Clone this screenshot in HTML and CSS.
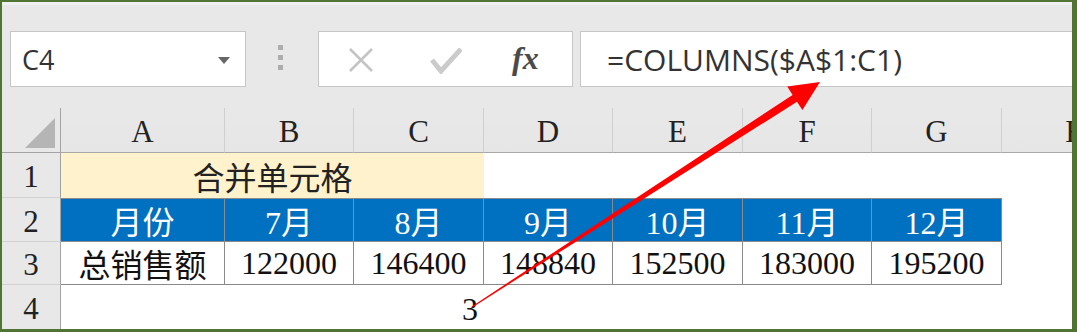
FILE: index.html
```html
<!DOCTYPE html>
<html lang="zh-CN">
<head>
  <meta charset="UTF-8">
  <title>COLUMNS</title>
  <link rel="stylesheet" href="styles.css">
</head>
<body>

  <div class="frame">
    <!-- formula bar -->
    <div class="formula-bar">
      <div class="name-box">
        <span class="name">C4</span>
        <span class="caret"></span>
      </div>
      <div class="grip"><i></i><i></i><i></i></div>
      <div class="buttons">
        <svg class="cancel" width="28" height="24" viewBox="0 0 28 24">
          <path d="M3 1 L25 23 M25 1 L3 23" stroke="#c4c4c4" stroke-width="2.6" fill="none"/>
        </svg>
        <svg class="enter" width="32" height="26" viewBox="0 0 32 26">
          <path d="M2 12 L11 23 L31 1" stroke="#cbcbcb" stroke-width="5" fill="none"/>
        </svg>
        <span class="fx">fx</span>
      </div>
      <div class="formula">=COLUMNS($A$1:C1)</div>
    </div>

    <!-- sheet -->
    <div class="sheet">
      <div class="corner"><span class="select-all"></span></div>
      <div class="col-head">A</div>
      <div class="col-head">B</div>
      <div class="col-head">C</div>
      <div class="col-head">D</div>
      <div class="col-head">E</div>
      <div class="col-head">F</div>
      <div class="col-head">G</div>
      <div class="col-head">H</div>

      <div class="row-head">1</div>
      <div class="merged">合并单元格</div>
      <div class="cell"></div>
      <div class="cell"></div>
      <div class="cell"></div>
      <div class="cell"></div>
      <div class="cell"></div>

      <div class="row-head">2</div>
      <div class="cell head">月份</div>
      <div class="cell head">7月</div>
      <div class="cell head">8月</div>
      <div class="cell head">9月</div>
      <div class="cell head">10月</div>
      <div class="cell head">11月</div>
      <div class="cell head">12月</div>
      <div class="cell"></div>

      <div class="row-head">3</div>
      <div class="cell data">总销售额</div>
      <div class="cell data">122000</div>
      <div class="cell data">146400</div>
      <div class="cell data">148840</div>
      <div class="cell data">152500</div>
      <div class="cell data">183000</div>
      <div class="cell data">195200</div>
      <div class="cell"></div>

      <div class="row-head last">4</div>
      <div class="cell"></div>
      <div class="cell"></div>
      <div class="cell num">3</div>
      <div class="cell"></div>
      <div class="cell"></div>
      <div class="cell"></div>
      <div class="cell"></div>
      <div class="cell"></div>
    </div>
  </div>

  <!-- red arrow from C4 to the formula -->
  <svg class="arrow" width="1077" height="332" viewBox="0 0 1077 332">
    <polygon points="471.7,306.5 792.6,94.9 787.2,86.5 820,82 802.4,110.1 797,101.7 472.3,307.5" fill="#ff0000"/>
  </svg>

</body>
</html>
```

FILE: styles.css
```css
body {
  margin: 0;
  padding: 0;
  position: relative;
  width: 1077px;
  height: 332px;
  overflow: hidden;
  background: #ffffff;
  color: #222;
}
.frame {
  box-sizing: border-box;
  width: 1077px;
  height: 332px;
  border: solid #4f7434;
  border-width: 2px 5px 3px 2px;
  overflow: hidden;
  background: #fff;
}

/* formula bar */
.formula-bar {
  height: 106px;
  box-sizing: border-box;
  display: flex;
  align-items: flex-start;
  background: #e8e8e8;
  border-top: 3px solid #f0f0f0;
  padding-top: 26px;
}
.name-box {
  box-sizing: border-box;
  width: 236px;
  height: 56px;
  margin-left: 8px;
  background: #fff;
  border: 1px solid #c6c6c6;
  display: flex;
  align-items: center;
  justify-content: space-between;
  padding: 0 15px 0 11px;
}
.name {
  font-family: "Open Sans", sans-serif;
  font-size: 27px;
  color: #333;
}
.caret {
  width: 0;
  height: 0;
  border-left: 6px solid transparent;
  border-right: 6px solid transparent;
  border-top: 7px solid #666;
  margin-top: 2px;
}
.grip {
  width: 5px;
  margin: 14px 35px 0 32px;
  display: flex;
  flex-direction: column;
  gap: 5px;
}
.grip i {
  display: block;
  width: 5px;
  height: 5px;
  background: #adadad;
}
.buttons {
  box-sizing: border-box;
  width: 255px;
  height: 56px;
  background: #fff;
  border: 1px solid #c6c6c6;
  display: flex;
  align-items: center;
  padding-left: 28px;
}
.cancel {
  margin-top: 2px;
}
.enter {
  margin-left: 55px;
  margin-top: 4px;
}
.fx {
  margin-left: 50px;
  font-family: "Liberation Serif", serif;
  font-style: italic;
  font-weight: bold;
  font-size: 32px;
  color: #4a4a4a;
  margin-top: -2px;
}
.formula {
  box-sizing: border-box;
  flex: 1;
  height: 56px;
  margin-left: 7px;
  background: #fff;
  border: 1px solid #c6c6c6;
  border-right: none;
  padding-left: 26px;
  display: flex;
  align-items: center;
  font-family: "Open Sans", sans-serif;
  font-size: 30px;
  color: #333;
}

/* sheet grid */
.sheet {
  display: grid;
  grid-template-columns: 59px 164px 129px 130px 129px 130px 129px 130px 150px;
  grid-template-rows: 45px 45px 44px 43px 44px;
  font-family: "Liberation Serif", "Noto Sans CJK SC", serif;
  font-size: 32px;
}
.sheet > div {
  box-sizing: border-box;
  display: flex;
  align-items: center;
  justify-content: center;
  white-space: nowrap;
}
.corner {
  background: #e8e8e8;
  border-right: 1px solid #a3a3a3;
  border-bottom: 1px solid #a3a3a3;
  position: relative;
}
.select-all {
  position: absolute;
  left: 23px;
  top: 10px;
  width: 0;
  height: 0;
  border-left: 30px solid transparent;
  border-bottom: 30px solid #b5b5b5;
}
.col-head {
  background: linear-gradient(#e8e8e8, #e8e8e8 5px, #e6e6e6);
  border-bottom: 1px solid #a8a8a8;
  border-right: 1px solid #cfcfcf;
  font-size: 31px;
  padding-top: 4px;
  color: #222;
}
.row-head {
  background: #e8e8e8;
  border-right: 1px solid #a3a3a3;
  border-bottom: 1px solid #d2d2d2;
  font-size: 31px;
  padding-top: 4px;
  color: #222;
}
.row-head.last {
  border-bottom: none;
}
.merged {
  grid-column: span 3;
  background: #fff2cc;
  color: #222;
}
.cell.head {
  background: #0070c0;
  color: #fff;
  border-top: 1px solid #8a8a8a;
  border-right: 1px solid #8a8a8a;
  border-bottom: 1px solid #8a8a8a;
}
.cell.data {
  border-right: 1px solid #8a8a8a;
  border-bottom: 1px solid #8a8a8a;
  color: #111;
}
.cell.num {
  justify-content: flex-end;
  padding: 4px 6px 0 0;
  color: #111;
}
.arrow {
  position: absolute;
  left: 0;
  top: 0;
  pointer-events: none;
}
```
